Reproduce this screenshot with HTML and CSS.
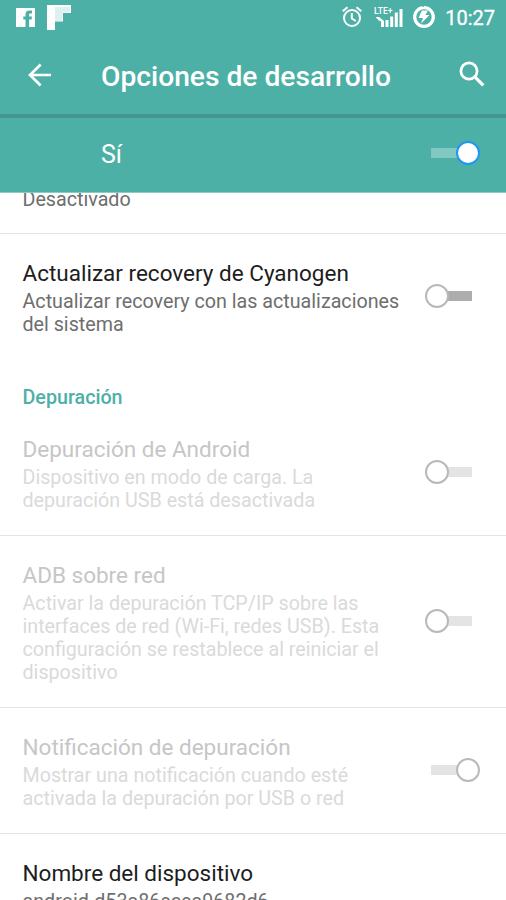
FILE: index.html
```html
<!DOCTYPE html>
<html lang="es">
<head>
<meta charset="utf-8">
<title>Opciones de desarrollo</title>
<link rel="stylesheet" href="styles.css">
</head>
<body>
<div class="screen">
  <header class="top">
    <div class="status">
      <svg class="fb" width="20" height="20" viewBox="0 0 20 20"><path fill="#fff" fill-rule="evenodd" d="M0 0h19v19H0zM9.500 19h3.600v-7.500h2.500l.4-3h-2.900V6.800c0-.9.300-1.400 1.400-1.400h1.500V2.600h-2.300c-2.900 0-4.200 1.500-4.200 4v1.900H7.300v3h2.200z"/></svg>
      <svg class="flip" width="24" height="25" viewBox="0 0 24 25"><path fill="#fff" d="M0 0h24v8h-8v8.500H8V25H0z"/><path fill="#dff1ef" d="M8 2h15v5.500h-7.500V16H8z"/></svg>
      <svg class="alarm" width="20" height="22" viewBox="0 0 20 22"><g fill="none" stroke="#fff" stroke-width="2"><circle cx="10" cy="12" r="8"/><path d="M9.800 7v5.500l4 2.500M.7 5.300 5.500 1.200M19.300 5.300 14.500 1.200"/></g></svg>
      <div class="signal">
        <span class="lte">LTE+</span>
        <svg width="29" height="20" viewBox="0 0 29 20"><path fill="#fff" d="M7 14h3v5H7zM11.500 12h3v7h-3zM16.200 8.500h3V19h-3zM20.800 4.500h3V19h-3zM25.500 1h3v18h-3zM1.500 9h4.300v4.500zM5 9l5 4v3.500L6 12.500z"/></svg>
      </div>
      <svg class="battery" width="24" height="24" viewBox="0 0 24 24"><circle cx="12" cy="12" r="9.300" fill="none" stroke="#fff" stroke-width="3.200"/><path fill="#fff" d="M9.800 5.500h6L13.500 10h4L9 18.500l2-5.500H6.500z"/><path stroke="#4db0a6" stroke-width="1.200" d="M11.200 0v2"/></svg>
      <span class="clock">10:27</span>
    </div>
    <div class="appbar">
      <svg class="back" width="24" height="24" viewBox="0 0 24 24"><path fill="none" stroke="#fff" stroke-width="2.700" d="M23 12H2M12.600 1.500 2 12l10.600 10.500"/></svg>
      <h1>Opciones de desarrollo</h1>
      <svg class="search" width="26" height="26" viewBox="0 0 26 26"><g fill="none" stroke="#fff"><circle cx="10" cy="10" r="8.100" stroke-width="2.700"/><path stroke-width="3.300" d="m15.600 15.600 8.700 8.700"/></g></svg>
    </div>
  </header>
  <div class="master"><span>Sí</span><i class="switch on accent"></i></div>
  <main class="list">
    <section class="partial"><p>Desactivado</p></section>
    <section class="row last">
      <div class="text"><h2>Actualizar recovery de Cyanogen</h2><p>Actualizar recovery con las actualizaciones<br>del sistema</p></div><i class="switch"></i>
    </section>
    <h3>Depuración</h3>
    <section class="row disabled">
      <div class="text"><h2>Depuración de Android</h2><p>Dispositivo en modo de carga. La<br>depuración USB está desactivada</p></div><i class="switch"></i>
    </section>
    <section class="row disabled">
      <div class="text"><h2>ADB sobre red</h2><p>Activar la depuración TCP/IP sobre las<br>interfaces de red (Wi-Fi, redes USB). Esta<br>configuración se restablece al reiniciar el<br>dispositivo</p></div><i class="switch"></i>
    </section>
    <section class="row disabled">
      <div class="text"><h2>Notificación de depuración</h2><p>Mostrar una notificación cuando esté<br>activada la depuración por USB o red</p></div><i class="switch on"></i>
    </section>
    <section class="row last">
      <div class="text"><h2>Nombre del dispositivo</h2><p>android-d53a86ecea9682d6</p></div>
    </section>
  </main>
</div>
</body>
</html>
```
FILE: styles.css
```css
*, *::before, *::after { box-sizing: border-box; }
body { margin: 0; font-family: Roboto, "Liberation Sans", sans-serif; }
h1, h2, h3, p { margin: 0; }
svg { display: block; flex: none; }
.screen { width: 506px; height: 900px; overflow: hidden; display: flex; flex-direction: column; background: #fff; }
.top { flex: none; height: 118px; background: #4db0a6; border-bottom: 4px solid #43958d; color: #fff; }
.status { height: 35px; display: flex; align-items: flex-start; padding: 0 11px 0 16px; }
.fb { margin-top: 8px; }
.flip { margin: 5px 0 0 11px; }
.alarm { margin: 6px 0 0 271px; }
.signal { position: relative; width: 29px; height: 20px; margin: 8px 0 0 12px; }
.lte { position: absolute; left: 0; top: 0; font-size: 8.500px; line-height: 7px; font-weight: 500; letter-spacing: .1px; }
.battery { margin: 5px 0 0 9px; }
.clock { margin-left: auto; font-size: 20px; line-height: 37px; font-weight: 400; -webkit-text-stroke: .3px #fff; white-space: nowrap; }
.appbar { height: 79px; display: flex; align-items: center; padding: 1px 21px 0 28px; }
.appbar h1 { margin-left: 49px; font-size: 28.200px; line-height: 34px; font-weight: 500; white-space: nowrap; margin-top: 4px; }
.search { margin-left: auto; margin-top: -2px; }
.master { flex: none; height: 75px; display: flex; align-items: center; justify-content: space-between; padding: 0 26px 4px 101px; background: #4db0a6; border-bottom: 1px solid #8dccc5; color: #fff; font-size: 25px; }
.master span { padding-top: 2px; }
.list { flex: 1; overflow: hidden; }
.partial { height: 41px; border-bottom: 1px solid #e3e3e3; padding-left: 22.500px; overflow: hidden; }
.partial p { margin-top: -5px; }
p { font-size: 19.700px; line-height: 23px; color: #6e6e6e; white-space: nowrap; }
.row { display: flex; align-items: center; justify-content: space-between; padding: 24px 26px 23px 22.500px; border-bottom: 1px solid #e3e3e3; }
.row.last { border-bottom: 0; }
.row h2 { padding: 1px 0 2px; }
h2 { font-size: 22.500px; line-height: 29px; font-weight: 400; color: #1d1d1d; white-space: nowrap; }
h3 { height: 51px; padding: 27px 0 0 22.500px; font-size: 19.700px; line-height: 24px; font-weight: 500; color: #4db0a6; }
.disabled h2 { color: #c6c6c6; }
.disabled p { color: #dadada; }
.switch { position: relative; flex: none; width: 55px; height: 24px; }
.row .switch { margin-bottom: 2px; }
.switch::before { content: ""; position: absolute; left: 6px; top: 7px; width: 41px; height: 10px; background: #adadad; }
.switch::after { content: ""; position: absolute; left: 0; top: 0; width: 24px; height: 24px; border: 2px solid #b9b9b9; border-radius: 50%; background: #fff; }
.switch.on::after { left: 31px; }
.disabled .switch::before { background: #e4e4e4; }
.accent::before { background: #82c8c1; }
.accent::after { border-color: #2196f3; }
```
